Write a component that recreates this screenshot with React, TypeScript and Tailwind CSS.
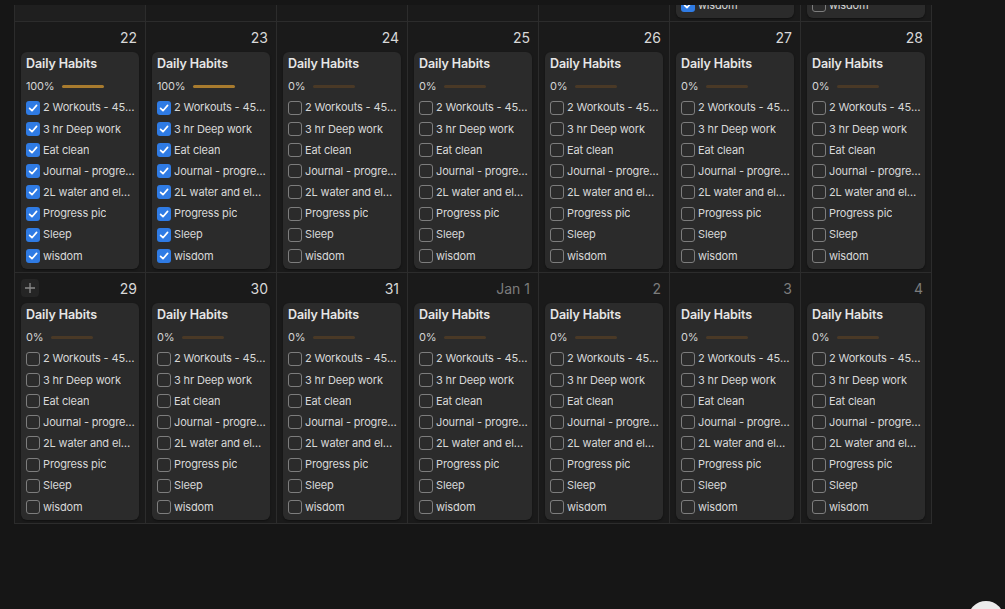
import React from "react";

const habits = [
  "2 Workouts - 45 min each",
  "3 hr Deep work",
  "Eat clean",
  "Journal - progress and goals",
  "2L water and electrolytes",
  "Progress pic",
  "Sleep",
  "wisdom",
];

type Day = { label: string; dim?: boolean; done?: boolean; card?: boolean; plus?: boolean; hover?: boolean };

const prevWeek: Day[] = [
  { label: "15", hover: true },
  { label: "16" },
  { label: "17" },
  { label: "18" },
  { label: "19" },
  { label: "20", card: true, done: true },
  { label: "21", card: true },
];

const weeks: Day[][] = [
  prevWeek,
  [
    { label: "22", card: true, done: true },
    { label: "23", card: true, done: true },
    { label: "24", card: true },
    { label: "25", card: true },
    { label: "26", card: true },
    { label: "27", card: true },
    { label: "28", card: true },
  ],
  [
    { label: "29", card: true, plus: true },
    { label: "30", card: true },
    { label: "31", card: true },
    { label: "Jan 1", card: true, dim: true },
    { label: "2", card: true, dim: true },
    { label: "3", card: true, dim: true },
    { label: "4", card: true, dim: true },
  ],
];

function Checkbox({ checked }: { checked: boolean }) {
  if (checked) {
    return (
      <span className="w-[14px] h-[14px] shrink-0 rounded-[3px] bg-[#2f7be4] flex items-center justify-center">
        <svg width="14" height="14" viewBox="0 0 14 14">
          <path d="M3.6 7.3 L6 9.7 L10.6 4.4" fill="none" stroke="white" strokeWidth="1.7" strokeLinecap="round" strokeLinejoin="round" />
        </svg>
      </span>
    );
  }
  return <span className="w-[14px] h-[14px] shrink-0 rounded-[3px] border-[1.5px] border-[#7d7d7d]" />;
}

function HabitCard({ done }: { done: boolean }) {
  return (
    <div className="rounded-[6px] bg-[#2b2b2b] shadow-[0_1px_2px_rgba(0,0,0,0.4)] pl-[5px] pr-[3px] pt-[3px] pb-[2px]">
      <div className="h-[18px] flex items-center text-[12.5px] font-semibold tracking-[-0.1px] text-[#e6e6e6]">Daily Habits</div>
      <div className="h-[24px] pt-[2px] flex items-center gap-[8px]">
        <span className="text-[11px] tracking-[-0.2px] text-[#d4d4d4]">{done ? "100%" : "0%"}</span>
        <span className={"w-[42px] h-[3px] rounded-full " + (done ? "bg-[#a87b2e]" : "bg-[#4a3926]")} />
      </div>
      {habits.map((h) => (
        <div key={h} className="h-[21.2px] flex items-center gap-[3px]">
          <Checkbox checked={!!done} />
          <span className="truncate text-[11px] tracking-[-0.15px] text-[#d8d8d8]">{h}</span>
        </div>
      ))}
    </div>
  );
}

function Cell({ day }: { day: Day }) {
  return (
    <div className={"h-[251px] border-r border-b border-[#2c2c2c] px-[6px] flex flex-col " + (day.hover ? "bg-[#1f1f1f]" : "")}>
      <div className="h-[30px] shrink-0 flex items-center justify-between">
        {day.plus ? (
          <span className="w-[18px] h-[18px] rounded-[4px] bg-[#252525] flex items-center justify-center">
            <svg width="12" height="12" viewBox="0 0 12 12">
              <path d="M6 1 V11 M1 6 H11" stroke="#8a8a8a" strokeWidth="1.3" />
            </svg>
          </span>
        ) : (
          <span />
        )}
        <span className={"pr-[2px] text-[14px] " + (day.dim ? "text-[#7c7c7c]" : "text-[#d8d8d8]")}>{day.label}</span>
      </div>
      {day.card && <HabitCard done={!!day.done} />}
    </div>
  );
}

export default function App() {
  return (
    <div className="w-[1005px] h-[609px] bg-[#161616] overflow-hidden relative font-['Inter',sans-serif]">
      <div className="mt-[5px] ml-[14px] w-[918px] h-[519px] overflow-hidden">
        <div className="-mt-[234px] grid grid-cols-[repeat(7,131px)] border-l border-[#2c2c2c] bg-[#1a1a1a]">
          {weeks.map((w, i) => w.map((d, j) => <Cell key={i + "-" + j} day={d} />))}
        </div>
      </div>
      <div className="absolute left-[968px] top-[601px] w-[36px] h-[36px] rounded-full bg-[#ececec]" />
    </div>
  );
}
